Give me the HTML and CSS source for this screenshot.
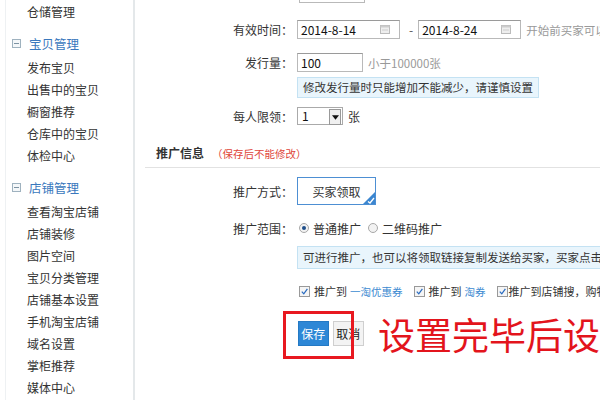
FILE: index.html
```html
<!DOCTYPE html>
<html lang="zh">
<head>
<meta charset="utf-8">
<link rel="stylesheet" href="styles.css">
</head>
<body>
<div class="page">
  <aside class="sidebar">
    <div class="item first">仓储管理</div>
    <div class="group-head"><span class="fold"></span>宝贝管理</div>
    <div class="item">发布宝贝</div>
    <div class="item">出售中的宝贝</div>
    <div class="item">橱窗推荐</div>
    <div class="item">仓库中的宝贝</div>
    <div class="item">体检中心</div>
    <div class="group-head"><span class="fold"></span>店铺管理</div>
    <div class="item">查看淘宝店铺</div>
    <div class="item">店铺装修</div>
    <div class="item">图片空间</div>
    <div class="item">宝贝分类管理</div>
    <div class="item">店铺基本设置</div>
    <div class="item">手机淘宝店铺</div>
    <div class="item">域名设置</div>
    <div class="item">掌柜推荐</div>
    <div class="item">媒体中心</div>
  </aside>
  <main class="main">
    <div class="row r-partial">
      <span class="label">优惠条件：</span>
      <span class="muted-dark">满</span>
      <span class="input w65"></span>
      <span class="muted-dark">元使用</span>
    </div>
    <div class="row r-date">
      <span class="label">有效时间：</span>
      <span class="input date">2014-8-14<svg class="cal" viewBox="0 0 10 10"><rect x="0.5" y="1.5" width="9" height="8" fill="#eee" stroke="#bbb"/><rect x="0.5" y="1.5" width="9" height="2" fill="#ccc"/><line x1="2" y1="6" x2="8" y2="6" stroke="#ccc"/></svg></span>
      <span class="dash">-</span>
      <span class="input date">2014-8-24<svg class="cal" viewBox="0 0 10 10"><rect x="0.5" y="1.5" width="9" height="8" fill="#eee" stroke="#bbb"/><rect x="0.5" y="1.5" width="9" height="2" fill="#ccc"/><line x1="2" y1="6" x2="8" y2="6" stroke="#ccc"/></svg></span>
      <span class="hint">开始前买家可以领取</span>
    </div>
    <div class="row r-qty">
      <span class="label">发行量：</span>
      <span class="input w65">100</span>
      <span class="hint">小于100000张</span>
    </div>
    <div class="notice n1">修改发行量时只能增加不能减少，请谨慎设置</div>
    <div class="row r-limit">
      <span class="label">每人限领：</span>
      <span class="select">1<span class="sel-btn"><svg viewBox="0 0 8 5" width="8" height="5"><path d="M0 0H8L4 5Z" fill="#111"/></svg></span></span>
      <span class="unit">张</span>
    </div>
    <div class="section"><b>推广信息</b><span class="warn">（保存后不能修改）</span></div>
    <div class="row r-mode">
      <span class="label">推广方式：</span>
      <span class="mode">买家领取<svg class="corner" viewBox="0 0 12 12"><path d="M12 0V12H0Z" fill="#3b86d0"/><path d="M5 9.5L7 11L11 6" stroke="#fff" stroke-width="1.3" fill="none"/></svg></span>
    </div>
    <div class="row r-range">
      <span class="label">推广范围：</span>
      <span class="radio on"></span><span class="rtext">普通推广</span>
      <span class="radio"></span><span class="rtext">二维码推广</span>
    </div>
    <div class="notice n2">可进行推广，也可以将领取链接复制发送给买家，买家点击链接即可领取</div>
    <div class="row r-check">
      <span class="chk"><svg viewBox="0 0 10 10"><path d="M2 5.2L4.2 7.6L8.2 2" stroke="#2a6cc0" stroke-width="1.4" fill="none"/></svg></span>
      <span class="ctext">推广到</span><span class="link">一淘优惠券</span>
      <span class="chk"><svg viewBox="0 0 10 10"><path d="M2 5.2L4.2 7.6L8.2 2" stroke="#2a6cc0" stroke-width="1.4" fill="none"/></svg></span>
      <span class="ctext">推广到</span><span class="link">淘券</span>
      <span class="chk tight"><svg viewBox="0 0 10 10"><path d="M2 5.2L4.2 7.6L8.2 2" stroke="#2a6cc0" stroke-width="1.4" fill="none"/></svg></span>
      <span class="ctext nowrap">推广到店铺搜，购物车</span>
    </div>
    <div class="row r-btns">
      <span class="btn save">保存</span>
      <span class="btn cancel">取消</span>
      <span class="big">设置完毕后设</span>
      <span class="frame"></span>
    </div>
  </main>
</div>
</body>
</html>
```
FILE: styles.css
```css
html, body {
  margin: 0;
  padding: 0;
  background: #fff;
  overflow: hidden;
}
body {
  font-family: "Noto Sans CJK SC", "Liberation Sans", sans-serif;
  font-size: 12px;
  color: #333;
  width: 600px;
  height: 400px;
}
.page {
  display: flex;
  height: 400px;
  overflow: hidden;
}
.sidebar {
  flex: 0 0 auto;
  width: 127px;
  margin-left: 5px;
  border-left: 1px solid #eef1f3;
  border-right: 2px solid #e4e8ea;
  height: 400px;
}
.item {
  height: 22px;
  line-height: 22px;
  padding-left: 21px;
  color: #333;
  white-space: nowrap;
}
.item.first {
  margin-top: 1px;
}
.group-head {
  display: flex;
  align-items: center;
  height: 22px;
  margin-top: 9px;
  margin-bottom: 3px;
  padding-left: 6px;
  color: #3a78bd;
  font-size: 12.5px;
}
.fold {
  position: relative;
  width: 7px;
  height: 7px;
  border: 1px solid #9fb2bf;
  background: #f4f7f9;
  margin-right: 8px;
}
.fold::after {
  content: "";
  position: absolute;
  left: 1px;
  right: 1px;
  top: 3px;
  height: 1px;
  background: #7d93a3;
}
.main {
  flex: 1 1 auto;
  position: relative;
  min-width: 0;
}
.row {
  display: flex;
  align-items: center;
  white-space: nowrap;
}
.label {
  flex: 0 0 auto;
  width: 158px;
  text-align: right;
  margin-right: 4px;
  color: #333;
}
.input {
  position: relative;
  flex: 0 0 auto;
  box-sizing: border-box;
  display: inline-flex;
  align-items: center;
  height: 19px;
  border: 1px solid #b9b9b9;
  border-top-color: #9a9a9a;
  padding-left: 3px;
  background: #fff;
  color: #111;
}
.w65 { width: 66px; }
.date { width: 103px; }
.cal {
  position: absolute;
  right: 9px;
  top: 3px;
  width: 10px;
  height: 10px;
}
.dash {
  margin: 0 5px 0 9px;
  color: #555;
}
.hint {
  margin-left: 5px;
  color: #999;
  font-size: 11.5px;
}
.muted-dark {
  color: #555;
  margin: 0 6px;
}
.r-partial { margin-top: -16px; height: 19px; }
.r-partial .label { visibility: hidden; }
.r-partial .label + .muted-dark { margin-left: -20px; margin-right: 10px; }
.r-date { margin-top: 17px; height: 19px; }
.r-qty { margin-top: 14px; height: 19px; }
.notice {
  box-sizing: border-box;
  margin-left: 162px;
  background: #e9f5fc;
  border: 1px solid #c4e2f3;
  color: #333;
  padding-left: 5px;
  font-size: 11.5px;
  white-space: nowrap;
}
.n1 {
  margin-top: 5px;
  width: max-content;
  padding-right: 5px;
  height: 21px;
  line-height: 19px;
}
.r-limit { margin-top: 9px; height: 18px; }
.select {
  position: relative;
  box-sizing: border-box;
  width: 46px;
  height: 18px;
  border: 1px solid #aaa;
  padding-left: 4px;
  line-height: 16px;
  color: #111;
}
.sel-btn {
  position: absolute;
  right: 1px;
  top: 1px;
  width: 10px;
  height: 14px;
  border: 1px solid #999;
  background: #f0f0f0;
  display: flex;
  align-items: center;
  justify-content: center;
}
.sel-btn svg { width: 7px; height: 5px; }
.unit { margin-left: 5px; }
.section {
  margin-top: 16px;
  margin-left: 10px;
  height: 26px;
  line-height: 24px;
  padding-left: 11px;
  border-bottom: 1px solid #e2e2e2;
  white-space: nowrap;
}
.section b {
  font-weight: bold;
  color: #333;
}
.warn {
  color: #e0453a;
  font-size: 10.5px;
  margin-left: 8px;
}
.r-mode { margin-top: 9px; height: 28px; }
.mode {
  position: relative;
  box-sizing: border-box;
  width: 79px;
  height: 28px;
  border: 1px solid #4d8fd3;
  display: flex;
  align-items: center;
  justify-content: center;
  color: #333;
}
.corner {
  position: absolute;
  right: 0;
  bottom: 0;
  width: 12px;
  height: 12px;
}
.r-range { margin-top: 14px; height: 18px; }
.radio {
  position: relative;
  box-sizing: border-box;
  width: 10px;
  height: 10px;
  border-radius: 50%;
  border: 1px solid #a8a8a8;
  background: #f2f2f2;
  margin-left: 2px;
  margin-right: 4px;
}
.radio.on::after {
  content: "";
  position: absolute;
  left: 2px;
  top: 2px;
  width: 4px;
  height: 4px;
  border-radius: 50%;
  background: #1e4e8a;
}
.rtext { margin-right: 5px; }
.n2 {
  margin-top: 9px;
  width: 303px;
  height: 23px;
  line-height: 21px;
  border-right: none;
  overflow: hidden;
}
.r-check {
  margin-top: 14px;
  height: 16px;
  padding-left: 162px;
  font-size: 11px;
  overflow: hidden;
}
.chk {
  flex: 0 0 auto;
  box-sizing: border-box;
  width: 11px;
  height: 11px;
  border: 1px solid #999;
  background: #f5f5f5;
  margin-left: 2px;
  margin-right: 4px;
  display: inline-flex;
}
.chk svg { width: 9px; height: 9px; }
.chk.tight { margin-right: 1px; margin-left: 2px; }
.ctext { margin-right: 3px; }
.link {
  color: #3c8ad1;
  font-size: 10.5px;
  margin-right: 9px;
}
.r-btns {
  margin-top: 22px;
  height: 25px;
  padding-left: 163px;
  position: relative;
}
.btn {
  box-sizing: border-box;
  height: 25px;
  display: inline-flex;
  align-items: center;
  justify-content: center;
}
.save {
  width: 45px;
  background: #2d87d6;
  color: #fff;
  border: 1px solid #2479c4;
}
.cancel {
  width: 46px;
  margin-left: 4px;
  background: #f3f3f3;
  border: 1px solid #cfcfcf;
  color: #222;
}
.big {
  margin-left: 14px;
  font-size: 37px;
  line-height: 40px;
  color: #e3141c;
  letter-spacing: 0;
}
.frame {
  position: absolute;
  left: 148px;
  top: -10px;
  width: 65px;
  height: 42px;
  border: 3px solid #e81820;
}
```
